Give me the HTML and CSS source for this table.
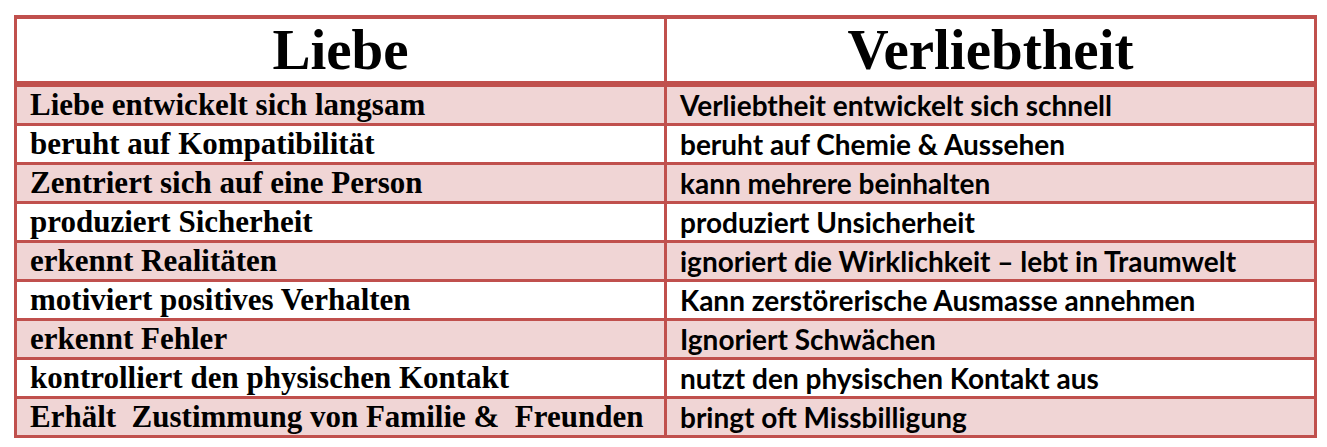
FILE: index.html
```html
<!DOCTYPE html>
<html lang="de">
<head>
<meta charset="utf-8">
<title>Liebe vs. Verliebtheit</title>
<link rel="stylesheet" href="styles.css">
</head>
<body>
<table class="cmp">
  <thead>
    <tr class="head">
      <th class="h-left">Liebe</th>
      <th class="h-right">Verliebtheit</th>
    </tr>
  </thead>
  <tbody>
    <tr class="pink"><td class="l">Liebe entwickelt sich langsam</td><td class="r">Verliebtheit entwickelt sich schnell</td></tr>
    <tr><td class="l">beruht auf Kompatibilität</td><td class="r">beruht auf Chemie &amp; Aussehen</td></tr>
    <tr class="pink"><td class="l">Zentriert sich auf eine Person</td><td class="r">kann mehrere beinhalten</td></tr>
    <tr><td class="l">produziert Sicherheit</td><td class="r">produziert Unsicherheit</td></tr>
    <tr class="pink"><td class="l">erkennt Realitäten</td><td class="r">ignoriert die Wirklichkeit – lebt in Traumwelt</td></tr>
    <tr><td class="l">motiviert positives Verhalten</td><td class="r">Kann zerstörerische Ausmasse annehmen</td></tr>
    <tr class="pink"><td class="l">erkennt Fehler</td><td class="r">Ignoriert Schwächen</td></tr>
    <tr><td class="l">kontrolliert den physischen Kontakt</td><td class="r">nutzt den physischen Kontakt aus</td></tr>
    <tr class="pink"><td class="l">Erhält&nbsp; Zustimmung von Familie &amp;&nbsp; Freunden</td><td class="r">bringt oft Missbilligung</td></tr>
  </tbody>
</table>
</body>
</html>
```

FILE: styles.css
```css
html, body {
  margin: 0;
  padding: 0;
  background: #ffffff;
}

.cmp {
  margin: 15px 0 0 14px;
  width: 1303px;
  border-collapse: collapse;
  table-layout: fixed;
  border: 3px solid #c0504d;
  border-top-width: 4px;
  color: #000;
}

.cmp th,
.cmp td {
  border: 3px solid #c0504d;
  padding: 0 0 0 13px;
  text-align: left;
  white-space: nowrap;
  overflow: hidden;
}

.cmp .h-left,
.cmp .h-right {
  width: 50%;
}

.head th {
  height: 62px;
  line-height: 62px;
  padding: 0;
  text-align: center;
  font-family: "Liberation Serif", "Times New Roman", serif;
  font-weight: bold;
  font-size: 57px;
  border-bottom-width: 6px;
}

.cmp td {
  height: 36px;
  line-height: 36px;
  vertical-align: middle;
}

.pink td {
  background: #f0d5d5;
}

.cmp .l {
  font-family: "Liberation Serif", "Times New Roman", serif;
  font-weight: bold;
  font-size: 31px;
}

.cmp .r {
  font-family: Lato, "Liberation Sans", sans-serif;
  font-weight: bold;
  font-size: 28px;
}
```
